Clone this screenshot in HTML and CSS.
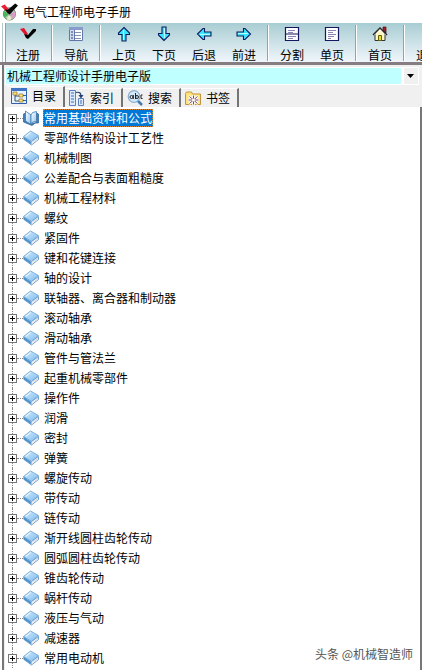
FILE: index.html
```
<!DOCTYPE html>
<html lang="zh-CN">
<head>
  <meta charset="UTF-8">
  <title>电气工程师电子手册</title>
  <meta name="viewport" content="width=device-width, initial-scale=1.0">
  <link rel="stylesheet" href="styles.css">
</head>
<body>

  <!-- Shared icons -->
  <svg class="defs" aria-hidden="true">
    <defs>
      <linearGradient id="cover" x1="0" y1="0" x2="1" y2="1">
        <stop offset="0" stop-color="#d4f0ff"/>
        <stop offset="1" stop-color="#7db8ec"/>
      </linearGradient>
      <linearGradient id="page" x1="0" y1="0" x2="1" y2="1">
        <stop offset="0" stop-color="#ffffff"/>
        <stop offset="1" stop-color="#8cc3ee"/>
      </linearGradient>
      <symbol id="arrow" viewBox="0 0 16 16">
        <path d="M8 1.500L13.500 7v1.500h-3.500v6.500h-4v-6.500h-3.500V7z" fill="#3ce6ff" stroke="#101c60" stroke-width="1.100"/>
        <path d="M7.500 4v10" stroke="#b4ffff" stroke-width="1"/>
      </symbol>
      <symbol id="book" viewBox="0 0 16 16">
        <path d="M1 6.500v3L8.500 15 15.500 9.500V6.500L9 11z" fill="#fff" stroke="#3c76ae" stroke-width=".7"/>
        <path d="M9.500 12.500l5.500-4.200" stroke="#b3c6d8" stroke-width=".7"/>
        <path d="M.5 6.500L7.500 1l8 4.500L8.500 11.500z" fill="url(#cover)" stroke="#5b97cb" stroke-width=".7"/>
        <path d="M.6 7L8.500 12v2.600L.6 9.300z" fill="#4a90cc"/>
        <path d="M2.500 6.500L7.500 2.500" stroke="#f6fdff" stroke-width="1"/>
      </symbol>
    </defs>
  </svg>

  <header class="titlebar">
    <svg class="app-icon" viewBox="0 0 18 18" aria-hidden="true">
      <circle cx="9" cy="11" r="6.500" fill="#b9c9bf" stroke="#718078"/>
      <path d="M9 11L3 8a6 6 0 0 0 1 7z" fill="#45b858"/>
      <path d="M9 11l6-2a6 6 0 0 1-2 7z" fill="#d99bc6"/>
      <path d="M9 11l-3 6a7 7 0 0 0 5 0z" fill="#e9edc4"/>
      <circle cx="9" cy="11" r="1.500" fill="#fff" stroke="#777" stroke-width=".6"/>
      <path d="M0 3l4-2 5 6-2 3z" fill="#ed1c2e"/>
      <path d="M7 10l-3-4 3 1 8-7 3 2-9 10z" fill="#080808"/>
    </svg>
    <h1>电气工程师电子手册</h1>
  </header>

  <nav class="toolbar">
    <button class="tool">
      <svg viewBox="0 0 16 16" aria-hidden="true">
        <path d="M0 3l4-1 4 6-2 2z" fill="#e3142c"/>
        <path d="M6 12L4 8l4 1 5-6h3v2l-8 8z" fill="#050505"/>
      </svg>
      注册
    </button>
    <span class="sep"></span>
    <button class="tool">
      <svg viewBox="0 0 16 16" aria-hidden="true">
        <path d="M1.500 1.500h13v13h-13z" fill="#fff" stroke="#6177aa"/>
        <path d="M1 1h14v3H1z" fill="#879bcd"/>
        <path d="M2 4h4v10H2z" fill="#d3dced"/>
        <path d="M3 6h2M3 9h2M3 12h2" stroke="#263b74"/>
        <path d="M7 6.500h6M7 9.500h6M7 12.500h6" stroke="#8190b9"/>
        <path d="M6.500 4v10" stroke="#6177aa"/>
      </svg>
      导航
    </button>
    <span class="sep"></span>
    <button class="tool">
      <svg aria-hidden="true"><use href="#arrow"/></svg>
      上页
    </button>
    <button class="tool">
      <svg class="down" aria-hidden="true"><use href="#arrow"/></svg>
      下页
    </button>
    <button class="tool">
      <svg class="left" aria-hidden="true"><use href="#arrow"/></svg>
      后退
    </button>
    <button class="tool">
      <svg class="right" aria-hidden="true"><use href="#arrow"/></svg>
      前进
    </button>
    <span class="sep"></span>
    <button class="tool">
      <svg viewBox="0 0 16 16" aria-hidden="true">
        <path d="M1.500 1.500h13v13h-13zM1 8h14" fill="#fff" stroke="#17175f" stroke-width="1.200"/>
        <path d="M4 4.500h7M4 6.500h5M4 10.500h8M4 12.500h5" stroke="#8c83b5"/>
      </svg>
      分割
    </button>
    <button class="tool">
      <svg viewBox="0 0 16 16" aria-hidden="true">
        <path d="M1.500 1.500h13v13h-13z" fill="#fff" stroke="#17175f" stroke-width="1.200"/>
        <path d="M4 4.500h8M4 6.500h5M4 8.500h8M4 10.500h6M4 12.500h3" stroke="#8c83b5"/>
      </svg>
      单页
    </button>
    <span class="sep"></span>
    <button class="tool">
      <svg viewBox="0 0 16 16" aria-hidden="true">
        <path d="M11 1h3v6l-3-3z" fill="#a31926" stroke="#4a1111" stroke-width=".7"/>
        <path d="M3 8l5-6 5 6v6.500H3z" fill="#fff6c5" stroke="#333" stroke-width="1"/>
        <path d="M1 9l7-7 7 7" fill="none" stroke="#28282a" stroke-width="1.500"/>
        <path d="M2.500 9L8 3.500 13.500 9" fill="none" stroke="#fff" stroke-width=".7"/>
        <path d="M6.500 9.500h3v5h-3z" fill="#e4dd20" stroke="#65600c"/>
      </svg>
      首页
    </button>
    <span class="sep"></span>
    <button class="tool">
      <svg viewBox="0 0 16 16" aria-hidden="true">
        <path d="M3 2h9v12H3z" fill="#fff" stroke="#111" stroke-width="2"/>
        <path d="M6 8h9M12 5l3 3-3 3" fill="none" stroke="#17175f"/>
      </svg>
      退出
    </button>
  </nav>

  <main class="panel">
    <div class="picker">
      <select aria-label="手册">
        <option>机械工程师设计手册电子版</option>
      </select>
      <svg class="caret" viewBox="0 0 7 4" aria-hidden="true"><path d="M0 0h7L3.500 4z"/></svg>
    </div>

    <div class="tabs" role="tablist">
      <button class="tab active" role="tab" aria-selected="true">
        <svg viewBox="0 0 16 16" aria-hidden="true">
          <path d="M.5.5h15v15H.5z" fill="#e6f2ff" stroke="#2f5fae"/>
          <path d="M0 0h16v3H0z" fill="#3e73c6"/>
          <path d="M4 6v7h4M4 8h5" fill="none" stroke="#414f6a"/>
          <path d="M2 4h4v3H2zM8 6h4v3H8zM8 11h4v3H8z" fill="#ffe17c" stroke="#8d7227" stroke-width=".7"/>
          <path d="M12 7.500h3M12 12.500h3" stroke="#2d63ac"/>
        </svg>
        目录
      </button>
      <button class="tab" role="tab" aria-selected="false">
        <svg viewBox="0 0 16 16" aria-hidden="true">
          <path d="M.5.5h6v15h-6z" fill="#dceaff" stroke="#5b82c0"/>
          <path d="M2 3h3M2 6h3M2 9h3M2 12h3" stroke="#416dae"/>
          <path d="M9.500 8.500h5v7h-5z" fill="#dceaff" stroke="#5b82c0"/>
          <path d="M11 11h2M11 13h2" stroke="#416dae"/>
          <path d="M7 2.500c4-1 5 1 5 4" fill="none" stroke="#263e70" stroke-width="1.200"/>
          <path d="M9.500 5h5L12 8.500z" fill="#263e70"/>
        </svg>
        索引
      </button>
      <button class="tab" role="tab" aria-selected="false">
        <svg viewBox="0 0 16 16" aria-hidden="true">
          <path d="M10 10l5 5" stroke="#4378b1" stroke-width="2.500"/>
          <circle cx="7" cy="6.500" r="5.800" fill="#d3e9fb" stroke="#8aaed1" stroke-width="1.200"/>
          <circle cx="4.500" cy="7" r="1.500" fill="none" stroke="#222"/>
          <path d="M6.300 5v4M8.500 3v6" stroke="#222"/>
          <circle cx="10" cy="7" r="1.500" fill="none" stroke="#222"/>
          <path d="M15.500 5h-1.500v3.500h1.500" fill="none" stroke="#222"/>
        </svg>
        搜索
      </button>
      <button class="tab" role="tab" aria-selected="false">
        <svg viewBox="0 0 16 16" aria-hidden="true">
          <path d="M.5 14.500V3.500l1-1.500h5l1 2h8v10.500z" fill="#ffe27a" stroke="#c2953a"/>
          <path d="M4 6l9 8M13 6l-9 8M8.500 5v10M3 10h11" stroke="#fff" stroke-width="2.500"/>
          <path d="M4.500 6.500l8 7M12.500 6.500l-8 7M8.500 5.500v9M3.500 10h10" stroke="#7a4560"/>
          <circle cx="8.500" cy="10" r="1.500" fill="#fff"/>
        </svg>
        书签
      </button>
    </div>

    <ul class="tree">
      <li class="selected">
        <button class="toggle" aria-label="展开"></button>
        <svg class="book" viewBox="0 0 16 16" aria-hidden="true">
          <path d="M.5 4l2-1v8l5.500 3 2-1h5.500V4l-2-1v9L9 15.500.5 12z" fill="#3e80bb" stroke="#285d95" stroke-width=".7"/>
          <path d="M2.500 1L8 5v9.500L2.500 11z" fill="url(#page)" stroke="#4078b0" stroke-width=".8"/>
          <path d="M8 5l1.500-2.500 4-1v10L9.500 12 8 14.500z" fill="url(#page)" stroke="#4078b0" stroke-width=".8"/>
        </svg>
        <a href="#">常用基础资料和公式</a>
      </li>
      <li><button class="toggle" aria-label="展开"></button><svg class="book" aria-hidden="true"><use href="#book"/></svg><a href="#">零部件结构设计工艺性</a></li>
      <li><button class="toggle" aria-label="展开"></button><svg class="book" aria-hidden="true"><use href="#book"/></svg><a href="#">机械制图</a></li>
      <li><button class="toggle" aria-label="展开"></button><svg class="book" aria-hidden="true"><use href="#book"/></svg><a href="#">公差配合与表面粗糙度</a></li>
      <li><button class="toggle" aria-label="展开"></button><svg class="book" aria-hidden="true"><use href="#book"/></svg><a href="#">机械工程材料</a></li>
      <li><button class="toggle" aria-label="展开"></button><svg class="book" aria-hidden="true"><use href="#book"/></svg><a href="#">螺纹</a></li>
      <li><button class="toggle" aria-label="展开"></button><svg class="book" aria-hidden="true"><use href="#book"/></svg><a href="#">紧固件</a></li>
      <li><button class="toggle" aria-label="展开"></button><svg class="book" aria-hidden="true"><use href="#book"/></svg><a href="#">键和花键连接</a></li>
      <li><button class="toggle" aria-label="展开"></button><svg class="book" aria-hidden="true"><use href="#book"/></svg><a href="#">轴的设计</a></li>
      <li><button class="toggle" aria-label="展开"></button><svg class="book" aria-hidden="true"><use href="#book"/></svg><a href="#">联轴器、离合器和制动器</a></li>
      <li><button class="toggle" aria-label="展开"></button><svg class="book" aria-hidden="true"><use href="#book"/></svg><a href="#">滚动轴承</a></li>
      <li><button class="toggle" aria-label="展开"></button><svg class="book" aria-hidden="true"><use href="#book"/></svg><a href="#">滑动轴承</a></li>
      <li><button class="toggle" aria-label="展开"></button><svg class="book" aria-hidden="true"><use href="#book"/></svg><a href="#">管件与管法兰</a></li>
      <li><button class="toggle" aria-label="展开"></button><svg class="book" aria-hidden="true"><use href="#book"/></svg><a href="#">起重机械零部件</a></li>
      <li><button class="toggle" aria-label="展开"></button><svg class="book" aria-hidden="true"><use href="#book"/></svg><a href="#">操作件</a></li>
      <li><button class="toggle" aria-label="展开"></button><svg class="book" aria-hidden="true"><use href="#book"/></svg><a href="#">润滑</a></li>
      <li><button class="toggle" aria-label="展开"></button><svg class="book" aria-hidden="true"><use href="#book"/></svg><a href="#">密封</a></li>
      <li><button class="toggle" aria-label="展开"></button><svg class="book" aria-hidden="true"><use href="#book"/></svg><a href="#">弹簧</a></li>
      <li><button class="toggle" aria-label="展开"></button><svg class="book" aria-hidden="true"><use href="#book"/></svg><a href="#">螺旋传动</a></li>
      <li><button class="toggle" aria-label="展开"></button><svg class="book" aria-hidden="true"><use href="#book"/></svg><a href="#">带传动</a></li>
      <li><button class="toggle" aria-label="展开"></button><svg class="book" aria-hidden="true"><use href="#book"/></svg><a href="#">链传动</a></li>
      <li><button class="toggle" aria-label="展开"></button><svg class="book" aria-hidden="true"><use href="#book"/></svg><a href="#">渐开线圆柱齿轮传动</a></li>
      <li><button class="toggle" aria-label="展开"></button><svg class="book" aria-hidden="true"><use href="#book"/></svg><a href="#">圆弧圆柱齿轮传动</a></li>
      <li><button class="toggle" aria-label="展开"></button><svg class="book" aria-hidden="true"><use href="#book"/></svg><a href="#">锥齿轮传动</a></li>
      <li><button class="toggle" aria-label="展开"></button><svg class="book" aria-hidden="true"><use href="#book"/></svg><a href="#">蜗杆传动</a></li>
      <li><button class="toggle" aria-label="展开"></button><svg class="book" aria-hidden="true"><use href="#book"/></svg><a href="#">液压与气动</a></li>
      <li><button class="toggle" aria-label="展开"></button><svg class="book" aria-hidden="true"><use href="#book"/></svg><a href="#">减速器</a></li>
      <li><button class="toggle" aria-label="展开"></button><svg class="book" aria-hidden="true"><use href="#book"/></svg><a href="#">常用电动机</a></li>
    </ul>
  </main>

  <p class="credit">头条 @机械智造师</p>

</body>
</html>
```
FILE: styles.css
```
* {
  box-sizing: border-box;
}

body {
  margin: 0;
  font: 12px/16px "Noto Sans CJK SC", sans-serif;
  color: #000;
  background: #fff;
  min-height: 100vh;
  display: flex;
  flex-direction: column;
  position: relative;
  overflow-x: hidden;
}

button, select {
  font: inherit;
  color: inherit;
  border: 0;
  border-radius: 0;
  padding: 0;
  background: none;
}

svg {
  flex: none;
  width: 16px;
  height: 16px;
}

.defs {
  position: absolute;
  width: 0;
  height: 0;
}

/* title bar */
.titlebar {
  display: flex;
  align-items: center;
  gap: 5px;
  height: 23px;
  padding-left: 1px;
}

.titlebar .app-icon {
  width: 17px;
  height: 18px;
}

h1 {
  margin: 0;
  font-size: 12px;
  font-weight: normal;
}

/* toolbar */
.toolbar {
  display: flex;
  height: 42px;
  padding-left: 8px;
  overflow: hidden;
  background: linear-gradient(90deg, #fff 2px, #b5c7cd 2px, #b5c7cd 3px, #fff 3px, #fff 5px, #8ba1a8 5px, #8ba1a8 6px, transparent 6px), linear-gradient(#a8cdd3, #f0f6fb);
  border-bottom: 3px solid #857d82;
}

.tool {
  flex: none;
  display: flex;
  flex-direction: column;
  align-items: center;
  gap: 5px;
  width: 40px;
  padding-top: 3px;
  white-space: nowrap;
}

.down {
  transform: rotate(180deg);
}

.left {
  transform: rotate(-90deg);
}

.right {
  transform: rotate(90deg);
}

.sep {
  flex: none;
  width: 2px;
  height: 36px;
  margin: 2px 3px;
  background: #8fa5ac;
  border-right: 1px solid #fff;
}

/* left panel */
.panel {
  flex: 1;
  display: flex;
  flex-direction: column;
  margin-left: 2px;
  border-left: 2px solid #77777a;
  background: #f0f0f0;
}

.picker {
  position: relative;
  margin: 2px 3px 0 1px;
  padding: 1px;
  background: #fff;
}

.picker select {
  display: block;
  appearance: none;
  width: 100%;
  height: 16px;
  padding: 0 18px 0 1px;
  line-height: 16px;
  background: linear-gradient(#f0f0f0, #f0f0f0) right / 14px 100% no-repeat, linear-gradient(#fff, #fff) right / 17px 100% no-repeat, #c0ffff;
}

.caret {
  position: absolute;
  right: 5px;
  top: 7px;
  width: 7px;
  height: 4px;
  pointer-events: none;
}

.tabs {
  display: flex;
  align-items: flex-end;
  height: 22px;
  padding-left: 3px;
}

.tab {
  display: flex;
  align-items: center;
  gap: 5px;
  width: 58px;
  height: 19px;
  padding-left: 4px;
  border-top: 1px solid #fff;
  border-right: 2px solid #747474;
  white-space: nowrap;
}

.tab.active {
  height: 21px;
  padding: 0 0 2px 4px;
}

.tree {
  flex: 1;
  list-style: none;
  margin: 0 0 0 1px;
  padding: 1px 0 0 3px;
  background: #fff;
  border-right: 2px solid #77777a;
}

.tree li {
  position: relative;
  display: flex;
  align-items: center;
  height: 20px;
}

/* dotted lines joining the nodes */
.tree li::before {
  content: "";
  position: absolute;
  left: 4px;
  top: 0;
  bottom: 0;
  border-left: 1px dotted #888;
}

.tree li.selected::before {
  top: 10px;
}

.tree li::after {
  content: "";
  position: absolute;
  left: 9px;
  top: 10px;
  width: 6px;
  border-top: 1px dotted #888;
}

.toggle {
  position: relative;
  flex: none;
  width: 9px;
  height: 9px;
  margin-right: 6px;
  border: 1px solid #777;
  background: linear-gradient(#000, #000) center / 5px 1px no-repeat, linear-gradient(#000, #000) center / 1px 5px no-repeat, #fff;
}

.book {
  margin-right: 4px;
}

.tree a {
  padding: 0 1px;
  line-height: 18px;
  color: #000;
  text-decoration: none;
}

.tree .selected a {
  color: #fff;
  background: #0078d7;
  outline: 1px dotted #d98430;
  outline-offset: -1px;
}

.credit {
  position: absolute;
  right: 9px;
  bottom: 8px;
  margin: 0;
  color: #555;
}
```
